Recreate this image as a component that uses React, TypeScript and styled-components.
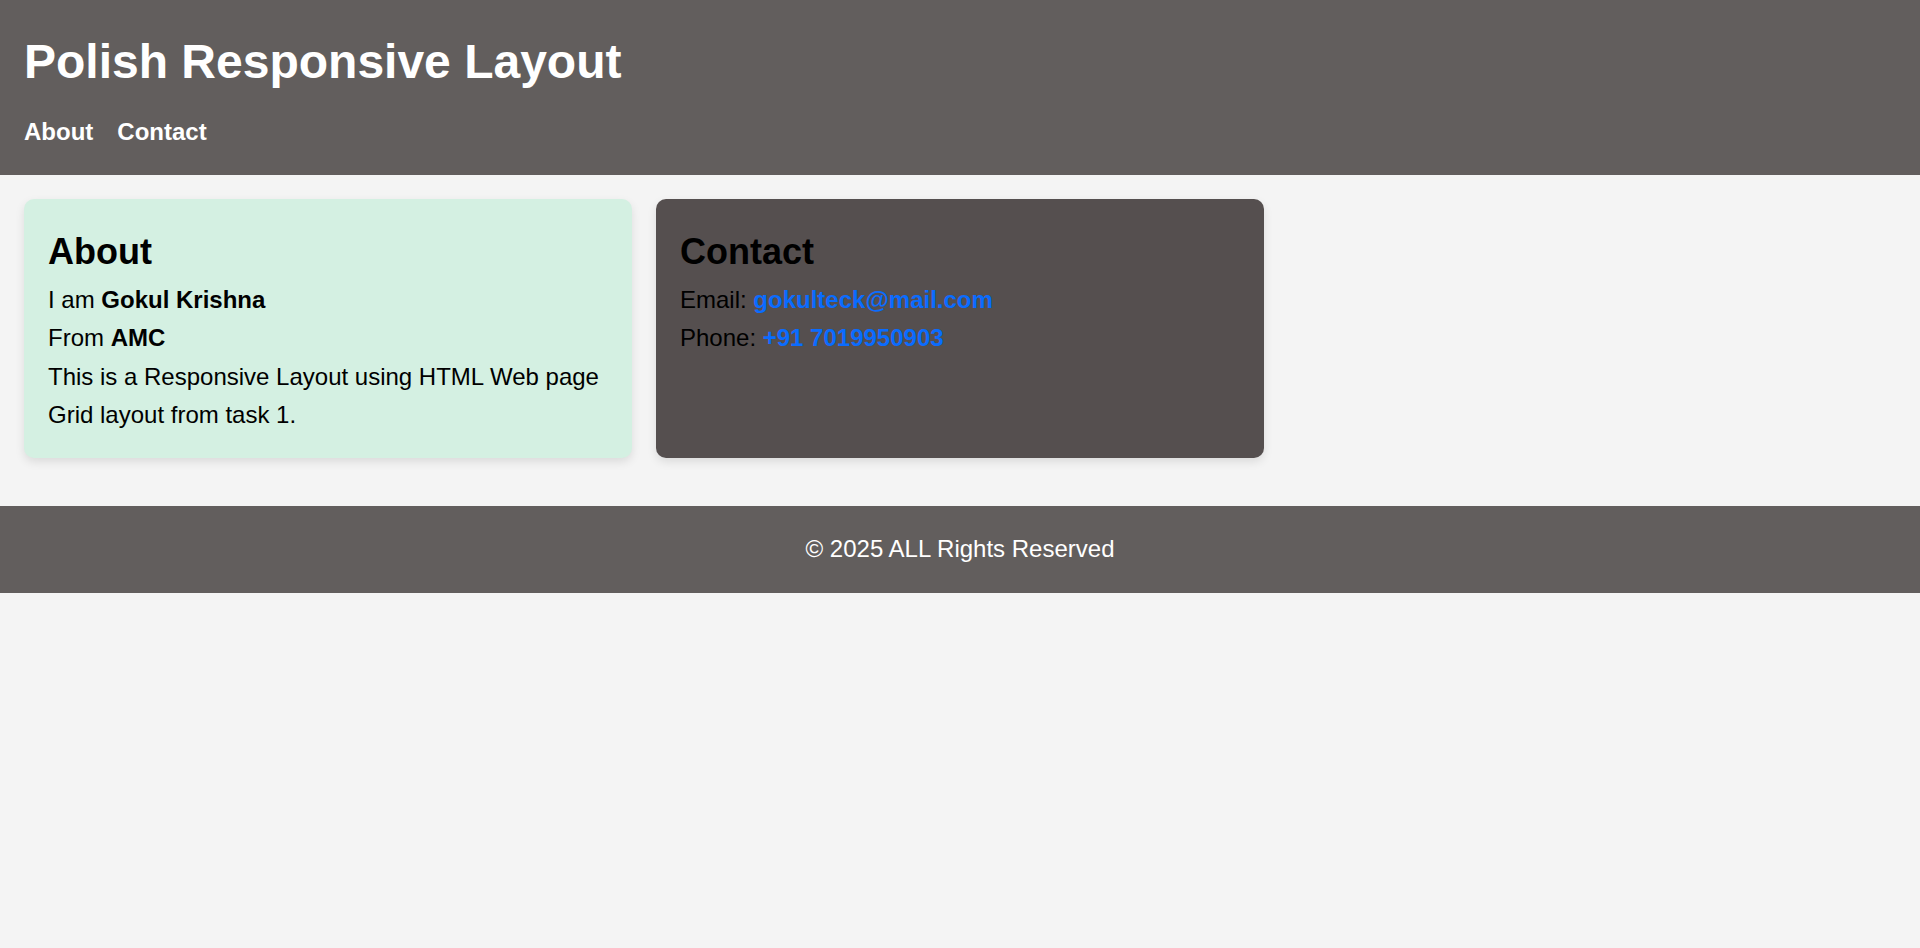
import styled, { createGlobalStyle } from 'styled-components';

const GlobalStyle = createGlobalStyle`
  * {
    box-sizing: border-box;
  }
  body {
    margin: 0;
    background: #f4f4f4;
    font-family: "Liberation Sans", Arial, sans-serif;
    font-size: 24px;
    line-height: 1.6;
    color: #000;
  }
`

export default function App() {
  return (
    <>
      <GlobalStyle />
      <Header>
        <Title>Polish Responsive Layout</Title>
        <Nav>
          <NavLink href="#about">About</NavLink>
          <NavLink href="#contact">Contact</NavLink>
        </Nav>
      </Header>

      <Main>
        <Card id="about" $variant="light">
          <CardTitle>About</CardTitle>
          <Text>I am <strong>Gokul Krishna</strong></Text>
          <Text>From <strong>AMC</strong></Text>
          <Text>This is a Responsive Layout using HTML Web page Grid layout from task 1.</Text>
        </Card>
        <Card id="contact" $variant="dark">
          <CardTitle>Contact</CardTitle>
          <Text>Email: <Link href="mailto:gokulteck@mail.com">gokulteck@mail.com</Link></Text>
          <Text>Phone: <Link href="tel:+917019950903">+91 7019950903</Link></Text>
        </Card>
      </Main>

      <Footer>© 2025 ALL Rights Reserved</Footer>
    </>
  )
}

const Header = styled.header`
  background: #625e5d;
  color: #fff;
  padding: 24px;
`
const Title = styled.h1`
  margin: 0 0 12px;
  font-size: 48px;
  font-weight: bold;
  line-height: 1.6;
`
const Nav = styled.nav`
  display: flex;
  gap: 24px;
`
const NavLink = styled.a`
  color: #fff;
  font-weight: bold;
  text-decoration: none;
`
const Main = styled.main`
  display: grid;
  grid-template-columns: repeat(3, 1fr);
  gap: 24px;
  padding: 24px;
`
const Card = styled.section<{ $variant: 'light' | 'dark' }>`
  background: ${(p) => (p.$variant === 'light' ? '#d4f0e2' : '#554f4f')};
  border-radius: 10px;
  padding: 24px;
  box-shadow: 0 4px 10px rgba(0, 0, 0, 0.1);
`
const CardTitle = styled.h2`
  margin: 0;
  font-size: 36px;
  line-height: 1.6;
`
const Text = styled.p`
  margin: 0;
`
const Link = styled.a`
  color: #0a6cff;
  font-weight: bold;
  text-decoration: none;
`
const Footer = styled.footer`
  margin-top: 24px;
  background: #625e5d;
  color: #fff;
  text-align: center;
  padding: 24px;
`
